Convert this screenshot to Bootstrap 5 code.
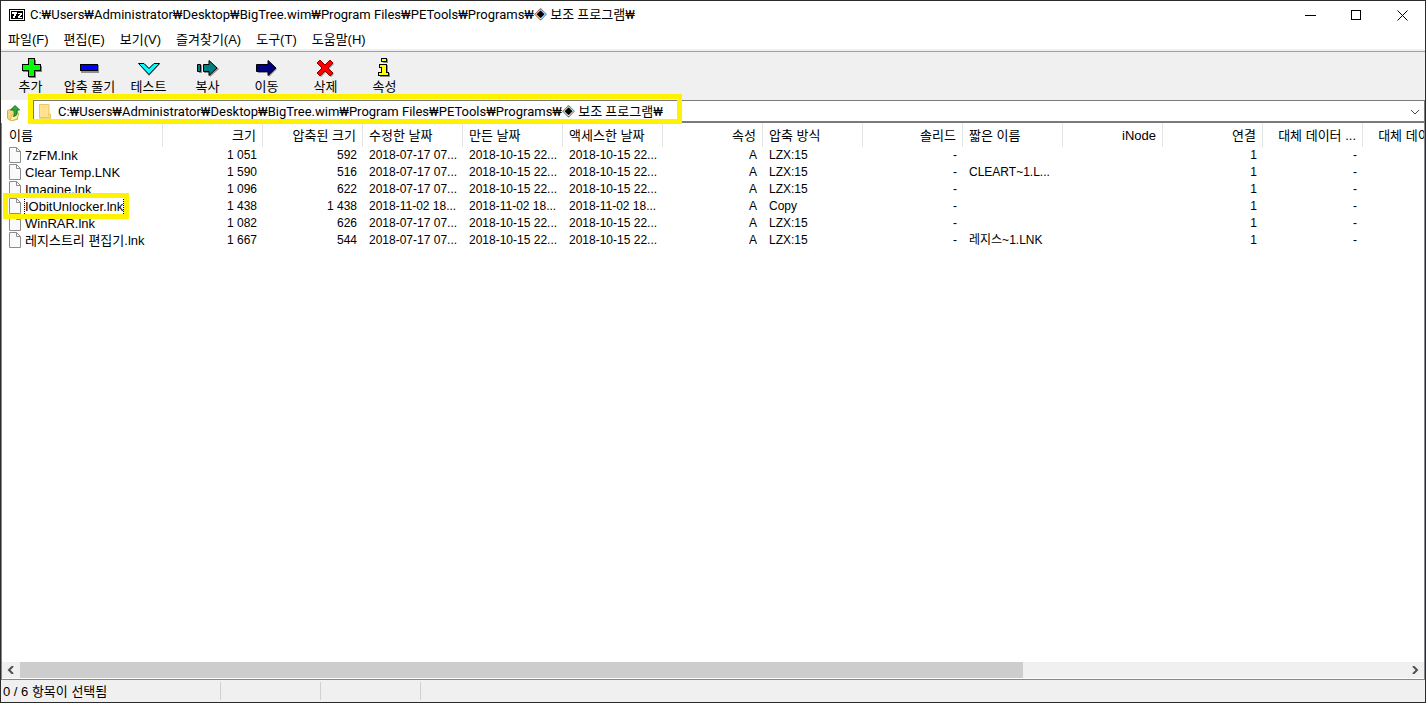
<!DOCTYPE html>
<html lang="ko">
<head>
<meta charset="utf-8">
<meta name="viewport" content="width=device-width, initial-scale=1">
<title>7-Zip</title>
<link href="https://cdn.jsdelivr.net/npm/bootstrap@5.3.0/dist/css/bootstrap.min.css" rel="stylesheet">
<style>
  body { font-family: "Liberation Sans", "Noto Sans CJK KR", sans-serif; font-size: 13px; line-height: 17px; color: #000; background: #fff; }
  button, input { font: inherit; color: inherit; }
  .app-window { border: 1px solid #2b2b2b; height: 100vh; }
  .title-bar { height: 29px; padding: 0 0 2px 8px; }
  .title-bar h1 { font-size: 13px; line-height: 17px; font-weight: 400; margin: 0 0 0 5px; }
  .title-bar h1, .combo input { font-family: Roboto, "Noto Sans CJK KR", sans-serif; }
  .caption-btn { width: 46px; height: 28px; }
  .plain { background: none; border: 0; padding: 0; color: #000; }
  .menu-bar { height: 21px; padding-left: 7px; gap: 15px; border-bottom: 2px solid #f0f0f0; }
  .tool-bar { background: #f0f0f0; border-top: 1px solid #a0a0a0; height: 49px; }
  .tool-btn { width: 59px; padding-top: 6px; white-space: nowrap; }
  .address-row { height: 23px; }
  .up-btn { width: 32px; padding-left: 5px; }
  .combo { border: 1px solid #7a7a7a; border-bottom-width: 2px; }
  .combo input { height: 17px; outline: 0; padding-left: 6px; }
  .marker { border: 5px solid #fff200; position: absolute; pointer-events: none; z-index: 2; }
  .marker-path { left: 27px; top: -6px; width: 654px; height: 30px; }
  .list-pane { border: 1px solid #828790; border-top: 0; }
  .file-table { table-layout: fixed; width: 1461px; border-collapse: separate; border-spacing: 0; }
  .file-table th { height: 24px; font-weight: 400; padding: 0 6px; border-right: 1px solid #e5e5e5; white-space: nowrap; }
  .file-table td { height: 17px; line-height: 17px; font-size: 12px; padding: 0 6px; white-space: nowrap; overflow: hidden; }
  .file-table td:first-child { font-size: 13px; overflow: visible; }
  .file-table th:first-child, .file-table td:first-child { padding-left: 7px; }
  .file-table .col-name { width: 161px; }
  .focus-text { outline: 1px dotted #000; }
  .marker-file { left: -6px; top: -5px; width: 126px; height: 26px; }
  .scroll-row { height: 17px; background: #f0f0f0; border-bottom: 1px solid #fff; }
  .scroll-btn { width: 18px; }
  .thumb { background: #cdcdcd; }
  .status-bar { height: 22px; background: #f0f0f0; padding: 2px 0; }
  .status-cell { width: 100px; border-right: 1px solid #d0d0d0; }
  .status-main { width: 220px; padding-left: 2px; }
</style>
</head>
<body>
<div class="app-window d-flex flex-column overflow-hidden">
  <header class="title-bar d-flex align-items-center">
    <svg width="16" height="12" viewBox="0 0 16 12" shape-rendering="crispEdges"><path d="M0 0h16v12H0z"/><path d="M1 1h14v10H1z" fill="#fff"/><path d="M2 2h12v8H2z"/><path d="M3 3h5v2H7v2H6v2H4V7h1V5H3zM9 4h4v2h-1v1h-1v1h2v1H9V7h1V6h1V5H9z" fill="#fff"/></svg>
    <h1 class="flex-fill text-nowrap overflow-hidden">C:₩Users₩Administrator₩Desktop₩BigTree.wim₩Program Files₩PETools₩Programs₩◈ 보조 프로그램₩</h1>
    <button class="plain caption-btn" aria-label="최소화"><svg width="11" height="11" shape-rendering="crispEdges"><path d="M0 5h11v1H0z"/></svg></button>
    <button class="plain caption-btn" aria-label="최대화"><svg width="11" height="11" shape-rendering="crispEdges"><path d="M.5.5h9v9h-9z" fill="none" stroke="#000"/></svg></button>
    <button class="plain caption-btn" aria-label="닫기"><svg width="11" height="11"><path d="M.5.5l10 10M10.500 .5l-10 10" fill="none" stroke="#000"/></svg></button>
  </header>

  <nav class="menu-bar d-flex align-items-center">
    <button class="plain">파일(F)</button>
    <button class="plain">편집(E)</button>
    <button class="plain">보기(V)</button>
    <button class="plain">즐겨찾기(A)</button>
    <button class="plain">도구(T)</button>
    <button class="plain">도움말(H)</button>
  </nav>

  <div class="tool-bar d-flex align-items-start">
    <button class="plain tool-btn d-flex flex-column align-items-center"><svg width="22" height="20" shape-rendering="crispEdges"><path d="M9 2h7v6h6v6h-6v6H9v-6H3V8h6z" fill="#808080"/><path d="M8.500 .5h6v6h6v6h-6v6h-6v-6h-6v-6h6z" fill="#0f0" stroke="#000"/></svg>추가</button>
    <button class="plain tool-btn d-flex flex-column align-items-center"><svg width="22" height="20" shape-rendering="crispEdges"><path d="M2 7h18v8H2z" fill="#909090"/><path d="M1.500 6.500h17v6h-17z" fill="#00f" stroke="#000"/></svg>압축 풀기</button>
    <button class="plain tool-btn d-flex flex-column align-items-center"><svg width="22" height="20"><path d="M1 6h6l4 4 4-4h7L11 18z" fill="#909090"/><path d="M.5 5.500h5.500l5 5 5-5h5.500L11 16.500z" fill="#0ff" stroke="#000"/></svg>테스트</button>
    <button class="plain tool-btn d-flex flex-column align-items-center"><svg width="22" height="20"><path d="M2 7h3v8H2zM7 7h6V3l9 8-9 8v-4H7z" fill="#909090"/><path d="M.5 6.500h3v7h-3zM6.500 6.500h5.500v-4l8 7.500-8 7.500v-4H6.500z" fill="#008080" stroke="#000"/></svg>복사</button>
    <button class="plain tool-btn d-flex flex-column align-items-center"><svg width="22" height="20"><path d="M2 7h11V3l8 8-8 8v-4H2z" fill="#909090"/><path d="M.5 6.500h11.500v-4l8 7.500-8 7.500v-4H.5z" fill="#000080" stroke="#000"/></svg>이동</button>
    <button class="plain tool-btn d-flex flex-column align-items-center"><svg width="22" height="20"><path d="M6 3l5 5 5-5 3 3-5 5 5 5-3 3-5-5-5 5-3-3 5-5-5-5z" fill="#909090"/><path d="M5 2l5 5 5-5 3 3-5 5 5 5-3 3-5-5-5 5-3-3 5-5-5-5z" fill="#f00" stroke="#800"/></svg>삭제</button>
    <button class="plain tool-btn d-flex flex-column align-items-center"><svg width="22" height="20" shape-rendering="crispEdges"><path d="M9 1h5v4h-5zM7 7h7v8h2v4H6v-4h3v-5H7z" fill="#909090"/><path d="M7.500 .5h5v3h-5zM5.500 6.500h7v8h2v3h-10v-3h3v-5h-2z" fill="#ff0" stroke="#000"/></svg>속성</button>
  </div>

  <div class="address-row d-flex position-relative">
    <button class="plain up-btn text-start" aria-label="상위 폴더"><svg width="16" height="17"><path d="M1.500 6.500l3-1 2 1h5v9l-7 1-3-2z" fill="#f5d779" stroke="#d6ae45"/><path d="M4 15l3-5 6-1-2 6-6 2z" fill="#fff0a8" stroke="#d6b755"/><path d="M4.500 6L9 1.500 13.500 6H11v3q0 3-3.500 3.500Q9 11 8 6z" fill="#35a535" stroke="#127a1d"/></svg></button>
    <div class="combo flex-fill d-flex align-items-center ps-1">
      <svg width="14" height="17"><path d="M1 1h10v10h2v5H1z" fill="#ffe391"/><path d="M1.500 1.500h9.500v13H1.500zM10 11h2.500v5H2" fill="none" stroke="#e9c765"/></svg>
      <input class="plain flex-fill" type="text" aria-label="경로" value="C:₩Users₩Administrator₩Desktop₩BigTree.wim₩Program Files₩PETools₩Programs₩◈ 보조 프로그램₩">
      <button class="plain px-1" aria-label="경로 목록"><svg width="10" height="8"><path d="M1 2l4 4 4-4" fill="none" stroke="#444"/></svg></button>
    </div>
    <div class="marker marker-path"></div>
  </div>

  <main class="list-pane flex-fill d-flex flex-column overflow-hidden">
    <div class="flex-fill overflow-hidden">
      <table class="file-table">
        <thead><tr id="heads"></tr></thead>
        <tbody id="files"></tbody>
      </table>
    </div>
    <div class="scroll-row d-flex">
      <button class="plain scroll-btn d-flex align-items-center justify-content-center" aria-label="왼쪽으로"><svg width="8" height="8"><path d="M6 0L2 4l4 4" fill="none" stroke="#505050" stroke-width="2"/></svg></button>
      <div class="flex-fill d-flex"><div class="thumb" style="width:72.4%"></div></div>
      <button class="plain scroll-btn d-flex align-items-center justify-content-center" aria-label="오른쪽으로"><svg width="8" height="8"><path d="M2 0l4 4-4 4" fill="none" stroke="#505050" stroke-width="2"/></svg></button>
    </div>
  </main>

  <footer class="status-bar d-flex flex-shrink-0">
    <div class="status-cell status-main d-flex align-items-center">0 / 6 항목이 선택됨</div>
    <div class="status-cell"></div>
    <div class="status-cell"></div>
  </footer>
</div>
<script src="https://cdn.jsdelivr.net/npm/bootstrap@5.3.0/dist/js/bootstrap.bundle.min.js"></script>
<script>
  const columns = [
    ['이름', 0], ['크기', 1], ['압축된 크기', 1], ['수정한 날짜', 0], ['만든 날짜', 0], ['액세스한 날짜', 0],
    ['속성', 1], ['압축 방식', 0], ['솔리드', 1], ['짧은 이름', 0], ['iNode', 1], ['연결', 1],
    ['대체 데이터 ...', 1], ['대체 데이터 ...', 1]
  ];
  const july = '2018-07-17 07...', oct = '2018-10-15 22...', nov = '2018-11-02 18...';
  const files = [
    ['7zFM.lnk', '1 051', '592', july, oct, oct, 'LZX:15', ''],
    ['Clear Temp.LNK', '1 590', '516', july, oct, oct, 'LZX:15', 'CLEART~1.L...'],
    ['Imagine.lnk', '1 096', '622', july, oct, oct, 'LZX:15', ''],
    ['IObitUnlocker.lnk', '1 438', '1 438', nov, nov, nov, 'Copy', ''],
    ['WinRAR.lnk', '1 082', '626', july, oct, oct, 'LZX:15', ''],
    ['레지스트리 편집기.lnk', '1 667', '544', july, oct, oct, 'LZX:15', '레지스~1.LNK']
  ];
  const page = '<svg class="flex-shrink-0 me-1" width="12" height="16"><path d="M.5.5h7l4 4v11H.5z" fill="#fafafa" stroke="#8c8c8c"/><path d="M7.500 .5v4h4" fill="none" stroke="#8c8c8c"/></svg>';
  document.getElementById('heads').innerHTML = columns.map(([t, right], i) =>
    `<th scope="col" class="${i ? '' : 'col-name '}${right ? 'text-end' : 'text-start'}">${t}</th>`).join('');
  document.getElementById('files').innerHTML = files.map(([name, size, packed, mod, made, seen, method, short], n) => {
    const label = n === 3 ? `<span class="focus-text">${name}</span><span class="marker marker-file"></span>` : `<span>${name}</span>`;
    const rest = [size, packed, mod, made, seen, 'A', method, '-', short, '', '1', '-', ''];
    return `<tr><td><div class="d-flex position-relative">${page}${label}</div></td>` +
      rest.map((v, i) => `<td class="${columns[i + 1][1] ? 'text-end' : ''}">${v}</td>`).join('') + '</tr>';
  }).join('');
</script>
</body>
</html>
